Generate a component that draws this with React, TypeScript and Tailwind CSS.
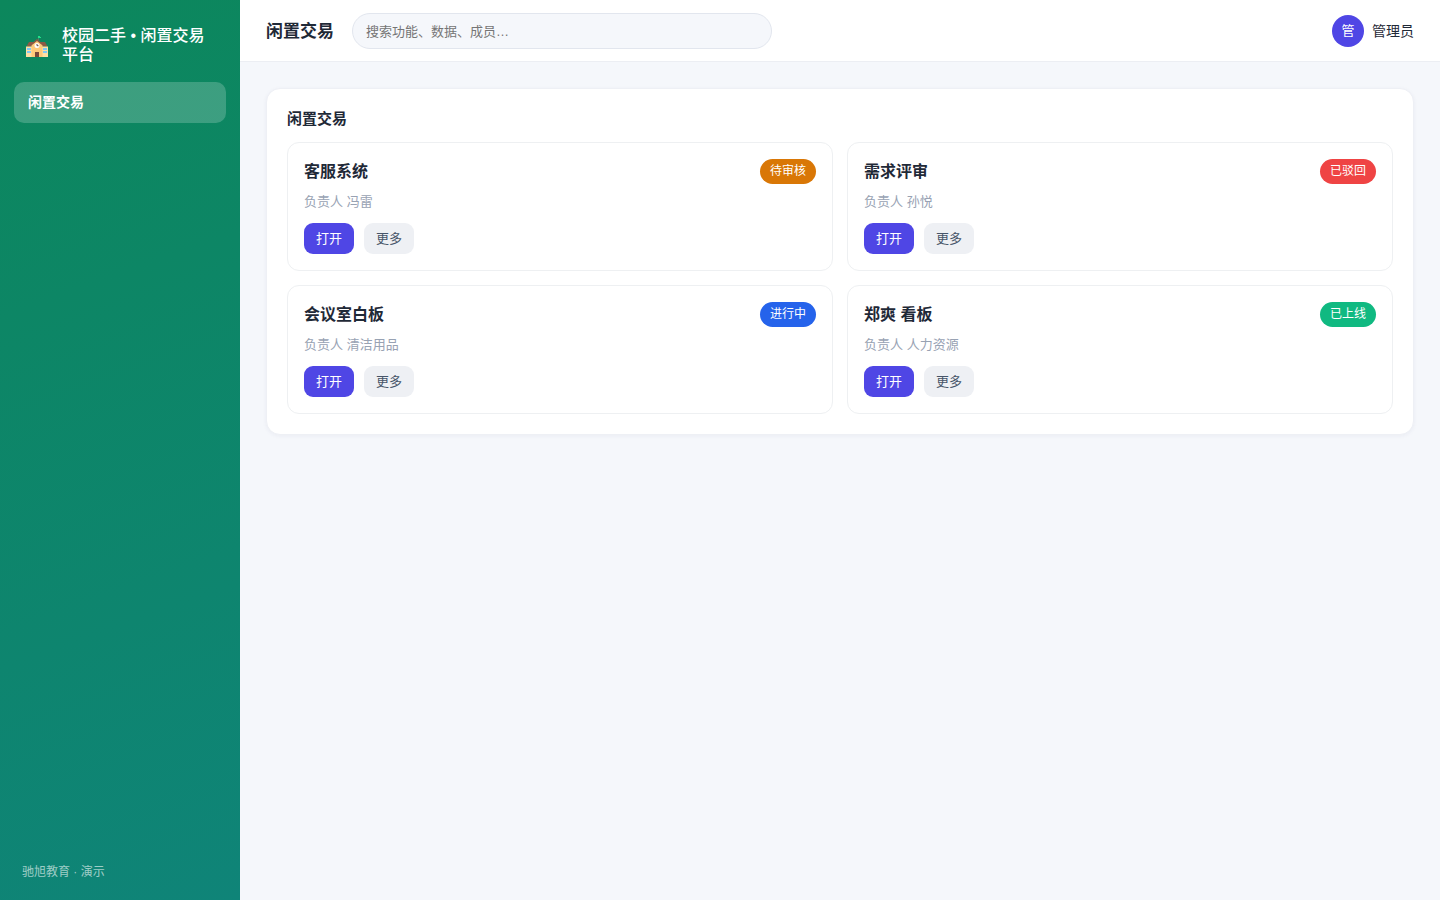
const listings = [
  { id: 1, title: '客服系统', owner: '冯雷', status: '待审核', color: 'bg-[#d97706]' },
  { id: 2, title: '需求评审', owner: '孙悦', status: '已驳回', color: 'bg-[#ef4444]' },
  { id: 3, title: '会议室白板', owner: '清洁用品', status: '进行中', color: 'bg-[#2563eb]' },
  { id: 4, title: '郑爽 看板', owner: '人力资源', status: '已上线', color: 'bg-[#10b981]' },
];

function SchoolIcon() {
  return (
    <svg viewBox="0 0 22 24" className="w-[22px] h-6 shrink-0" aria-hidden="true">
      <path d="M3 9h16l2.500 4.500H.5z" fill="#8d5a45" />
      <path d="M0 13.500h22V24H0z" fill="#ffe0a3" />
      <path d="M5.500 12L11 7.500l5.500 4.500v12h-11z" fill="#ffca7a" />
      <path d="M4.500 13v-1.500L11 6l6.500 5.500V13L11 8z" fill="#8d5a45" />
      <path d="M1 15h4v2H1zM1 18h4v2H1zM17 15h4v2h-4zM17 18h4v2h-4z" fill="#82c8f5" />
      <path d="M9 19h4v5H9z" fill="#78483a" />
      <circle cx="11" cy="12.500" r="2.500" fill="#fff" />
      <path d="M11 11v1.700h1.500" fill="none" stroke="#5d4037" strokeWidth=".9" />
      <path d="M12.500 3v4" stroke="#5f7a6c" strokeWidth=".8" />
      <path d="M12 3h2v1h1v1h-3z" fill="#22e08a" />
    </svg>
  );
}

function Sidebar() {
  return (
    <aside className="w-60 shrink-0 flex flex-col px-3.5 text-white bg-[linear-gradient(160deg,#0c875c,#0f8478)]">
      <div className="flex items-center gap-3.5 px-3 pt-[26px] pb-[18px]">
        <SchoolIcon />
        <div className="text-base leading-[19px] font-medium">校园二手 • 闲置交易平台</div>
      </div>
      <nav>
        <a href="#trade" className="block rounded-[10px] bg-white/20 px-3.5 py-2.5 text-sm leading-[21px] font-bold">
          闲置交易
        </a>
      </nav>
      <div className="mt-auto px-2 pb-[19px] text-xs leading-[18px] text-white/60">驰旭教育 · 演示</div>
    </aside>
  );
}

export default function App() {
  return (
    <div className="flex min-h-screen bg-[#f5f7fb] text-[#1f2937] font-['Liberation_Sans','Noto_Sans_CJK_SC',sans-serif]">
      <Sidebar />

      <div className="flex-1 min-w-0">
        <header className="flex items-center gap-[18px] bg-white border-b border-[#eceef3] px-[26px] pt-[13px] pb-3">
          <h1 className="text-[17px] leading-[25px] font-bold">闲置交易</h1>
          <input
            type="search"
            aria-label="搜索"
            placeholder="搜索功能、数据、成员…"
            className="w-[420px] h-9 rounded-full border border-[#e2e6ee] bg-[#f5f7fb] px-[13px] text-[13px] placeholder:text-[#757575] outline-none"
          />
          <div className="ml-auto flex items-center gap-2 text-sm">
            <span className="w-8 h-8 rounded-full bg-[#4f46e5] text-white text-[13px] flex items-center justify-center">管</span>
            管理员
          </div>
        </header>

        <main className="p-[26px]">
          <section className="bg-white rounded-[14px] border border-[#eef0f5] shadow-[0_1px_4px_rgba(30,41,90,0.05)] p-5">
            <h2 className="mb-3.5 text-[15px] leading-[19px] font-bold">闲置交易</h2>
            <div className="grid grid-cols-2 gap-3.5">
              {listings.map((item) => (
                <article key={item.id} className="rounded-xl border border-[#eef0f2] p-4">
                  <div className="flex items-center justify-between">
                    <h3 className="text-base leading-[25px] font-bold">{item.title}</h3>
                    <span className={`rounded-full px-2.5 py-1 text-xs leading-[17px] text-white ${item.color}`}>
                      {item.status}
                    </span>
                  </div>
                  <p className="mt-2 text-[13px] leading-5 text-[#98a2b3]">负责人 {item.owner}</p>
                  <div className="mt-[11px] flex gap-2.5 text-[13px] leading-[19px]">
                    <button className="rounded-[9px] bg-[#4f46e5] text-white px-3 py-1.5 cursor-pointer">打开</button>
                    <button className="rounded-[9px] bg-[#eef0f4] text-[#475569] px-3 py-1.5 cursor-pointer">更多</button>
                  </div>
                </article>
              ))}
            </div>
          </section>
        </main>
      </div>
    </div>
  );
}
